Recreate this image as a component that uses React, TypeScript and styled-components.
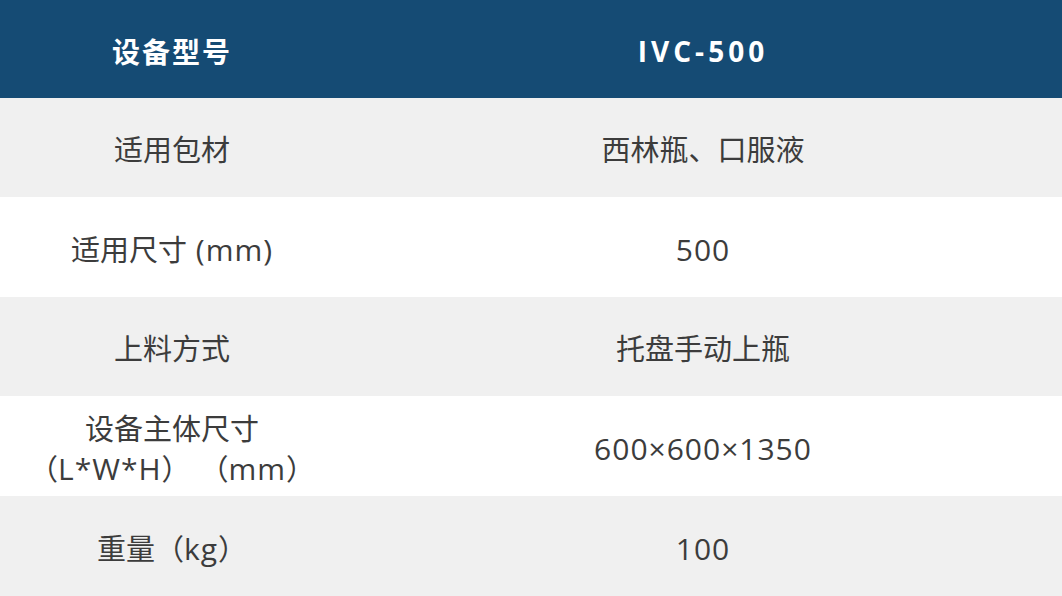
import React from "react";
import styled, { createGlobalStyle } from "styled-components";

const Global = createGlobalStyle`
  html, body { margin: 0; padding: 0; background: #ffffff; }
  body { font-family: "Open Sans", "Noto Sans CJK SC", sans-serif; }
`;

const Table = styled.div`
  width: 1062px;
  height: 596px;
  display: grid;
  grid-template-columns: 344px 1fr;
  grid-template-rows: 98px 99px 100px 99px 100px 100px;
`;

const HeadCell = styled.div<{ $latin?: boolean }>`
  background: #154b74;
  color: #ffffff;
  font-weight: 700;
  font-size: 28px;
  letter-spacing: ${(p) => (p.$latin ? "4px" : "2px")};
  display: flex;
  align-items: center;
  justify-content: center;
  padding-top: 3px;
  box-sizing: border-box;
`;

const Cell = styled.div<{ $shade: boolean }>`
  background: ${(p) => (p.$shade ? "#f0f0f0" : "#ffffff")};
  color: #3c3c3c;
  font-size: 29px;
  line-height: 40px;
  display: flex;
  flex-direction: column;
  align-items: center;
  justify-content: center;
  text-align: center;
  padding-top: 5px;
  box-sizing: border-box;
`;

const Latin = styled.span`
  font-size: 30px;
  letter-spacing: 1px;
`;

const Line = styled.span`
  white-space: pre;
`;

function renderText(text: string) {
  const parts = text.split(/([A-Za-z0-9*×() ]+)/).filter((s) => s !== "");
  return parts.map((p, i) =>
    /^[A-Za-z0-9*×() ]+$/.test(p) ? <Latin key={i}>{p}</Latin> : <React.Fragment key={i}>{p}</React.Fragment>
  );
}

const rows: { label: string[]; value: string }[] = [
  { label: ["适用包材"], value: "西林瓶、口服液" },
  { label: ["适用尺寸 (mm)"], value: "500" },
  { label: ["上料方式"], value: "托盘手动上瓶" },
  { label: ["设备主体尺寸", "（L*W*H） （mm）"], value: "600×600×1350" },
  { label: ["重量（kg）"], value: "100" },
];

export default function App() {
  return (
    <>
      <Global />
      <Table>
        <HeadCell>设备型号</HeadCell>
        <HeadCell $latin>IVC-500</HeadCell>
        {rows.map((r, i) => (
          <React.Fragment key={i}>
            <Cell $shade={i % 2 === 0}>
              {r.label.map((l, j) => (
                <Line key={j}>{renderText(l)}</Line>
              ))}
            </Cell>
            <Cell $shade={i % 2 === 0}>
              <Line>{renderText(r.value)}</Line>
            </Cell>
          </React.Fragment>
        ))}
      </Table>
    </>
  );
}
